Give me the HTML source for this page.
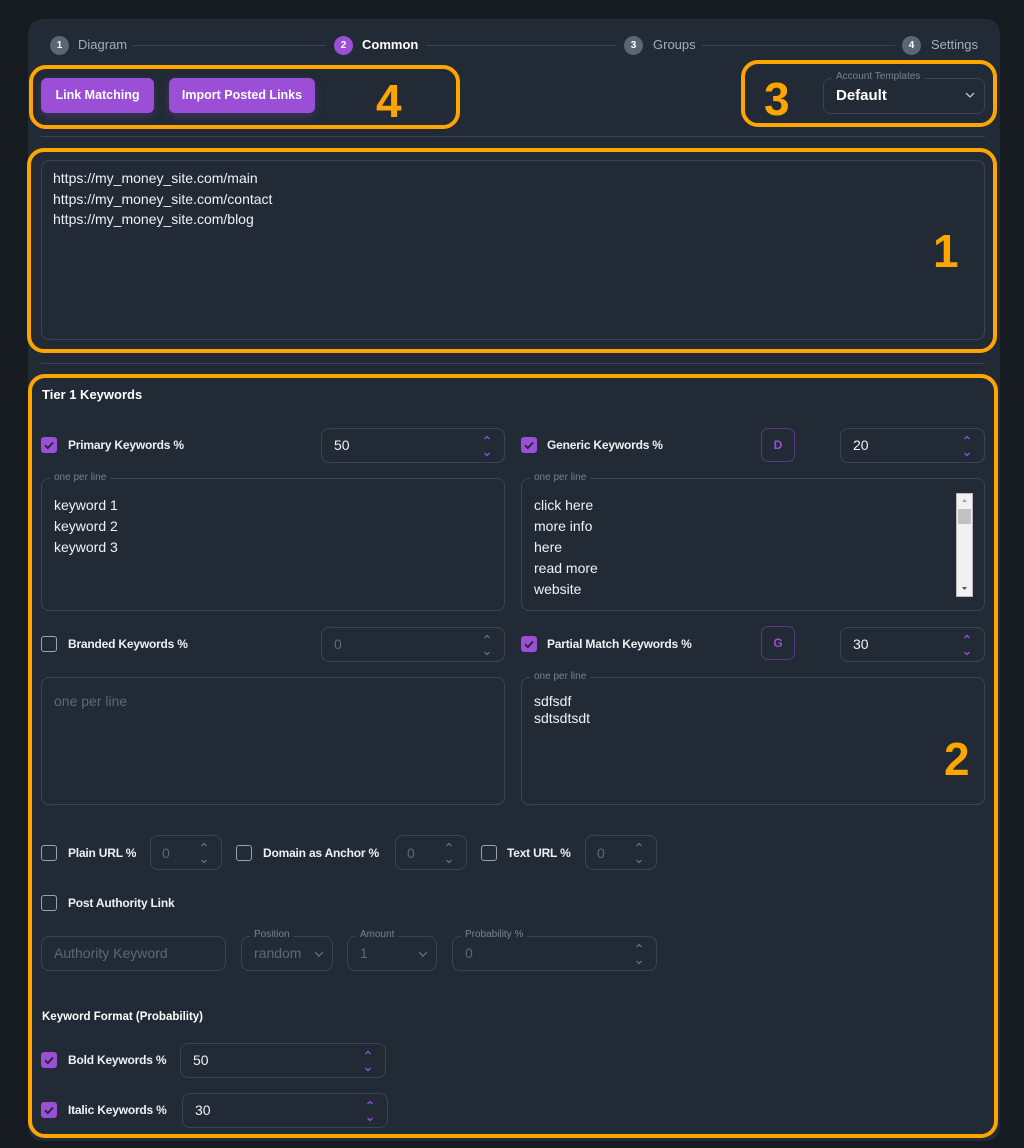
<!DOCTYPE html>
<html><head><meta charset="utf-8"><style>
*{box-sizing:border-box;margin:0;padding:0}
body{width:1024px;height:1148px;background:#161b22;font-family:"Liberation Sans",sans-serif;color:#e8ecf0;position:relative;overflow:hidden}
.a{position:absolute}
.card{left:28px;top:19px;width:972px;height:1122px;background:#212a35;border-radius:14px}
.or{border:4px solid #ffa500;border-radius:17px}
.big{color:#ffa500;font-weight:bold;font-size:46px;line-height:1}
.circ{width:19px;height:19px;border-radius:50%;background:#5b6673;color:#fff;font-size:10px;font-weight:bold;text-align:center;line-height:19px}
.sl{font-size:13px;color:#a5adb8;line-height:19px}
.ln{height:1px;background:#3a4552}
.btn{background:#9b4fd6;border-radius:6px;color:#fff;font-weight:bold;font-size:12.5px;text-align:center;line-height:35px;height:35px;box-shadow:0 4px 10px rgba(155,79,214,.25)}
.box{border:1px solid #3a4551;border-radius:8px}
.lg{font-size:10px;color:#79828e;background:#212a35;padding:0 4px;line-height:11px}
.lbl{font-size:12px;font-weight:bold;color:#eef1f4;line-height:16px;letter-spacing:-0.2px}
.cb{width:16px;height:16px;border-radius:3px}
.cb.on{background:#9b4fd6}
.cb.off{border:1.5px solid #9aa3ad}
.t{font-size:14px;color:#f0f2f5}
.m{font-size:14px;color:#5f6873}
.ltr{width:34px;height:34px;border:1px solid #5a3a86;border-radius:7px;color:#9b4fd6;font-weight:bold;font-size:12px;text-align:center;line-height:32px}
</style></head><body>
<div class="a card"></div>

<div class="a circ" style="left:50px;top:36px">1</div><div class="a sl" style="left:78px;top:35px">Diagram</div>
<div class="a ln" style="left:133px;top:45px;width:193px"></div>
<div class="a circ" style="left:334px;top:36px;background:#9b4fd6">2</div><div class="a sl" style="left:362px;top:35px;color:#fff;font-weight:bold">Common</div>
<div class="a ln" style="left:426px;top:45px;width:191px"></div>
<div class="a circ" style="left:624px;top:36px">3</div><div class="a sl" style="left:653px;top:35px">Groups</div>
<div class="a ln" style="left:702px;top:45px;width:193px"></div>
<div class="a circ" style="left:902px;top:36px">4</div><div class="a sl" style="left:931px;top:35px">Settings</div>

<div class="a btn" style="left:41px;top:78px;width:113px">Link Matching</div>
<div class="a btn" style="left:169px;top:78px;width:146px">Import Posted Links</div>
<div class="a big" style="left:376px;top:78px">4</div>
<div class="a or" style="left:29px;top:65px;width:431px;height:64px"></div>

<div class="a big" style="left:764px;top:76px">3</div>
<div class="a box" style="left:823px;top:78px;width:162px;height:36px"></div>
<div class="a lg" style="left:832px;top:71px">Account Templates</div>
<div class="a" style="left:836px;top:87px;font-size:15px;font-weight:bold;color:#fff">Default</div>
<svg class="a" style="left:965px;top:92px" width="10" height="6"><path d="M1 1l4 4 4-4" stroke="#c0c6ce" stroke-width="1.3" fill="none"/></svg>
<div class="a or" style="left:741px;top:60px;width:256px;height:67px"></div>

<div class="a ln" style="left:41px;top:136px;width:944px"></div>

<div class="a box" style="left:41px;top:160px;width:944px;height:180px"></div>
<div class="a t" style="left:53px;top:168px;line-height:20.5px">https://my_money_site.com/main<br>https://my_money_site.com/contact<br>https://my_money_site.com/blog</div>
<div class="a big" style="left:933px;top:228px">1</div>
<div class="a or" style="left:27px;top:148px;width:970px;height:205px"></div>

<div class="a ln" style="left:41px;top:363px;width:944px"></div>

<div class="a" style="left:42px;top:387px;font-size:13px;font-weight:bold;color:#fff">Tier 1 Keywords</div>

<div class="a cb on" style="left:41px;top:437px"><svg width="16" height="16"><path d="M4 8.3l2.8 2.8 5.2-5.6" stroke="#1e2530" stroke-width="1.8" fill="none"/></svg></div>
<div class="a lbl" style="left:68px;top:437px">Primary Keywords %</div>
<div class="a box" style="left:321px;top:428px;width:184px;height:35px"></div>
<div class="a t" style="left:334px;top:437px">50</div>
<svg class="a" style="left:482px;top:433px" width="10" height="26"><path d="M2.5 6l2.5-2.5 2.5 2.5M2.5 20l2.5 2.5 2.5-2.5" stroke="#9b4fd6" stroke-width="1.3" fill="none"/></svg>

<div class="a cb on" style="left:521px;top:437px"><svg width="16" height="16"><path d="M4 8.3l2.8 2.8 5.2-5.6" stroke="#1e2530" stroke-width="1.8" fill="none"/></svg></div>
<div class="a lbl" style="left:547px;top:437px">Generic Keywords %</div>
<div class="a ltr" style="left:761px;top:428px">D</div>
<div class="a box" style="left:840px;top:428px;width:145px;height:35px"></div>
<div class="a t" style="left:853px;top:437px">20</div>
<svg class="a" style="left:962px;top:433px" width="10" height="26"><path d="M2.5 6l2.5-2.5 2.5 2.5M2.5 20l2.5 2.5 2.5-2.5" stroke="#9b4fd6" stroke-width="1.3" fill="none"/></svg>

<div class="a box" style="left:41px;top:478px;width:464px;height:133px"></div>
<div class="a lg" style="left:50px;top:472px">one per line</div>
<div class="a t" style="left:54px;top:495px;line-height:21px">keyword 1<br>keyword 2<br>keyword 3</div>
<div class="a box" style="left:521px;top:478px;width:464px;height:133px"></div>
<div class="a lg" style="left:530px;top:472px">one per line</div>
<div class="a t" style="left:534px;top:495px;line-height:21px">click here<br>more info<br>here<br>read more<br>website</div>
<div class="a" style="left:956px;top:493px;width:17px;height:104px;background:#f1f1f1;border:1px solid #bbb"></div>
<div class="a" style="left:958px;top:509px;width:13px;height:15px;background:#c1c1c1"></div>
<svg class="a" style="left:960px;top:497px" width="9" height="97"><path d="M2 5l2.5-3 2.5 3z" fill="#a0a0a0"/><path d="M2 90l2.5 3 2.5-3z" fill="#505050"/></svg>

<div class="a cb off" style="left:41px;top:636px"></div>
<div class="a lbl" style="left:68px;top:636px">Branded Keywords %</div>
<div class="a box" style="left:321px;top:627px;width:184px;height:35px"></div>
<div class="a m" style="left:334px;top:636px">0</div>
<svg class="a" style="left:482px;top:632px" width="10" height="26"><path d="M2.5 6l2.5-2.5 2.5 2.5M2.5 20l2.5 2.5 2.5-2.5" stroke="#6b7480" stroke-width="1.2" fill="none"/></svg>

<div class="a cb on" style="left:521px;top:636px"><svg width="16" height="16"><path d="M4 8.3l2.8 2.8 5.2-5.6" stroke="#1e2530" stroke-width="1.8" fill="none"/></svg></div>
<div class="a lbl" style="left:547px;top:636px">Partial Match Keywords %</div>
<div class="a ltr" style="left:761px;top:626px">G</div>
<div class="a box" style="left:840px;top:627px;width:145px;height:35px"></div>
<div class="a t" style="left:853px;top:636px">30</div>
<svg class="a" style="left:962px;top:632px" width="10" height="26"><path d="M2.5 6l2.5-2.5 2.5 2.5M2.5 20l2.5 2.5 2.5-2.5" stroke="#9b4fd6" stroke-width="1.3" fill="none"/></svg>

<div class="a box" style="left:41px;top:677px;width:464px;height:128px"></div>
<div class="a m" style="left:54px;top:693px">one per line</div>
<div class="a box" style="left:521px;top:677px;width:464px;height:128px"></div>
<div class="a lg" style="left:530px;top:671px">one per line</div>
<div class="a t" style="left:534px;top:693px;line-height:17px">sdfsdf<br>sdtsdtsdt</div>
<div class="a big" style="left:944px;top:736px">2</div>

<div class="a cb off" style="left:41px;top:845px"></div>
<div class="a lbl" style="left:68px;top:845px">Plain URL %</div>
<div class="a box" style="left:150px;top:835px;width:72px;height:35px"></div>
<div class="a m" style="left:162px;top:845px">0</div>
<svg class="a" style="left:199px;top:840px" width="10" height="26"><path d="M2.5 6l2.5-2.5 2.5 2.5M2.5 20l2.5 2.5 2.5-2.5" stroke="#6b7480" stroke-width="1.2" fill="none"/></svg>
<div class="a cb off" style="left:236px;top:845px"></div>
<div class="a lbl" style="left:263px;top:845px">Domain as Anchor %</div>
<div class="a box" style="left:395px;top:835px;width:72px;height:35px"></div>
<div class="a m" style="left:407px;top:845px">0</div>
<svg class="a" style="left:444px;top:840px" width="10" height="26"><path d="M2.5 6l2.5-2.5 2.5 2.5M2.5 20l2.5 2.5 2.5-2.5" stroke="#6b7480" stroke-width="1.2" fill="none"/></svg>
<div class="a cb off" style="left:481px;top:845px"></div>
<div class="a lbl" style="left:507px;top:845px">Text URL %</div>
<div class="a box" style="left:585px;top:835px;width:72px;height:35px"></div>
<div class="a m" style="left:597px;top:845px">0</div>
<svg class="a" style="left:634px;top:840px" width="10" height="26"><path d="M2.5 6l2.5-2.5 2.5 2.5M2.5 20l2.5 2.5 2.5-2.5" stroke="#6b7480" stroke-width="1.2" fill="none"/></svg>

<div class="a cb off" style="left:41px;top:895px"></div>
<div class="a lbl" style="left:68px;top:895px">Post Authority Link</div>

<div class="a box" style="left:41px;top:936px;width:185px;height:35px"></div>
<div class="a m" style="left:54px;top:945px">Authority Keyword</div>
<div class="a box" style="left:241px;top:936px;width:92px;height:35px"></div>
<div class="a lg" style="left:250px;top:929px">Position</div>
<div class="a m" style="left:254px;top:945px">random</div>
<svg class="a" style="left:314px;top:951px" width="10" height="6"><path d="M1 1l4 4 4-4" stroke="#6b7480" stroke-width="1.2" fill="none"/></svg>
<div class="a box" style="left:347px;top:936px;width:90px;height:35px"></div>
<div class="a lg" style="left:356px;top:929px">Amount</div>
<div class="a m" style="left:360px;top:945px">1</div>
<svg class="a" style="left:418px;top:951px" width="10" height="6"><path d="M1 1l4 4 4-4" stroke="#6b7480" stroke-width="1.2" fill="none"/></svg>
<div class="a box" style="left:452px;top:936px;width:205px;height:35px"></div>
<div class="a lg" style="left:461px;top:929px">Probability %</div>
<div class="a m" style="left:465px;top:945px">0</div>
<svg class="a" style="left:634px;top:941px" width="10" height="26"><path d="M2.5 6l2.5-2.5 2.5 2.5M2.5 20l2.5 2.5 2.5-2.5" stroke="#6b7480" stroke-width="1.2" fill="none"/></svg>

<div class="a" style="left:42px;top:1011px;font-size:11.5px;font-weight:bold;color:#fff">Keyword Format (Probability)</div>

<div class="a cb on" style="left:41px;top:1052px"><svg width="16" height="16"><path d="M4 8.3l2.8 2.8 5.2-5.6" stroke="#1e2530" stroke-width="1.8" fill="none"/></svg></div>
<div class="a lbl" style="left:68px;top:1052px">Bold Keywords %</div>
<div class="a box" style="left:180px;top:1043px;width:206px;height:35px"></div>
<div class="a t" style="left:193px;top:1052px">50</div>
<svg class="a" style="left:363px;top:1048px" width="10" height="26"><path d="M2.5 6l2.5-2.5 2.5 2.5M2.5 20l2.5 2.5 2.5-2.5" stroke="#9b4fd6" stroke-width="1.3" fill="none"/></svg>

<div class="a cb on" style="left:41px;top:1102px"><svg width="16" height="16"><path d="M4 8.3l2.8 2.8 5.2-5.6" stroke="#1e2530" stroke-width="1.8" fill="none"/></svg></div>
<div class="a lbl" style="left:68px;top:1102px">Italic Keywords %</div>
<div class="a box" style="left:182px;top:1093px;width:206px;height:35px"></div>
<div class="a t" style="left:195px;top:1102px">30</div>
<svg class="a" style="left:365px;top:1098px" width="10" height="26"><path d="M2.5 6l2.5-2.5 2.5 2.5M2.5 20l2.5 2.5 2.5-2.5" stroke="#9b4fd6" stroke-width="1.3" fill="none"/></svg>

<div class="a or" style="left:28px;top:374px;width:970px;height:764px"></div>
</body></html>
